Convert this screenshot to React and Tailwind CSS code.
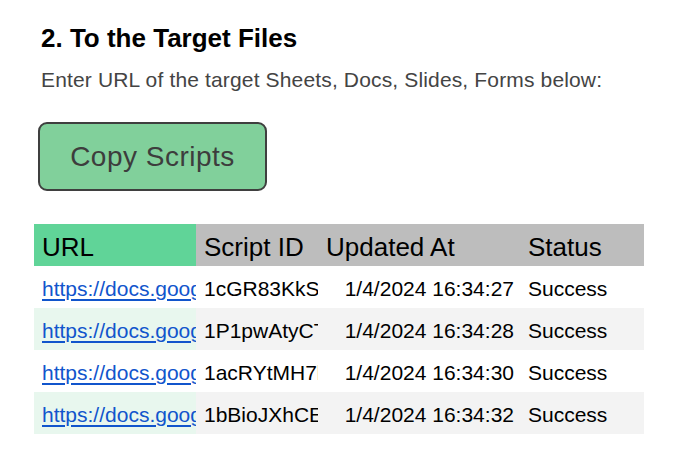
import React from "react";

const rows = [
  { url: "https://docs.google.com/spreadsheets/d/1x", id: "1cGR83KkSq0vZ7", at: "1/4/2024 16:34:27", status: "Success" },
  { url: "https://docs.google.com/document/d/1y", id: "1P1pwAtyCTf8Lm", at: "1/4/2024 16:34:28", status: "Success" },
  { url: "https://docs.google.com/presentation/d/1z", id: "1acRYtMH7bQe2W", at: "1/4/2024 16:34:30", status: "Success" },
  { url: "https://docs.google.com/forms/d/1w", id: "1bBioJXhCEr4Kp", at: "1/4/2024 16:34:32", status: "Success" },
];

export default function App() {
  return (
    <div className="w-[674px] h-[476px] bg-white pl-[34px] pt-[23px] font-['Liberation_Sans',Arial,sans-serif] text-black">
      <h2 className="ml-[7px] text-[26px] leading-[30px] font-bold text-black">
        2. To the Target Files
      </h2>
      <p className="ml-[7px] mt-[15px] text-[21px] leading-[24px] tracking-[0.15px] text-[#444444]">
        Enter URL of the target Sheets, Docs, Slides, Forms below:
      </p>
      <button className="ml-[4px] mt-[30px] flex h-[69px] w-[229px] items-center justify-center rounded-[9px] border-2 border-[#3f3f3f] bg-[#81d09b] text-[28px] leading-[32px] tracking-[0.5px] text-[#3d3d3d]">
        Copy Scripts
      </button>
      <div className="mt-[33px] grid w-[610px] grid-cols-[162px_122px_202px_124px]">
        <div className="h-[42px] bg-[#60d498] pl-[8px] pt-[9px] text-[26px] leading-[28px] whitespace-nowrap overflow-hidden">URL</div>
        <div className="h-[42px] bg-[#bdbdbd] pl-[8px] pt-[9px] text-[26px] leading-[28px] whitespace-nowrap overflow-hidden">Script ID</div>
        <div className="h-[42px] bg-[#bdbdbd] pl-[8px] pt-[9px] text-[26px] leading-[28px] whitespace-nowrap overflow-hidden">Updated At</div>
        <div className="h-[42px] bg-[#bdbdbd] pl-[8px] pt-[9px] text-[26px] leading-[28px] whitespace-nowrap overflow-hidden">Status</div>
        {rows.map((r, i) => {
          const odd = i % 2 === 1;
          return (
            <React.Fragment key={i}>
              <div className={`h-[42px] pl-[8px] pt-[4px] text-[21px] leading-[38px] whitespace-nowrap overflow-hidden ${odd ? "bg-[#e8f7ee]" : "bg-white"}`}>
                <a href="#" className="text-[#1155cc] underline decoration-[1.5px] underline-offset-[3px]">{r.url}</a>
              </div>
              <div className={`h-[42px] pl-[8px] pt-[4px] text-[21px] leading-[38px] whitespace-nowrap overflow-hidden ${odd ? "bg-[#f3f3f3]" : "bg-white"}`}>
                {r.id}
              </div>
              <div className={`h-[42px] pr-[6px] pt-[4px] text-right text-[21px] leading-[38px] whitespace-nowrap overflow-hidden ${odd ? "bg-[#f3f3f3]" : "bg-white"}`}>
                {r.at}
              </div>
              <div className={`h-[42px] pl-[8px] pt-[4px] text-[21px] leading-[38px] whitespace-nowrap overflow-hidden ${odd ? "bg-[#f3f3f3]" : "bg-white"}`}>
                {r.status}
              </div>
            </React.Fragment>
          );
        })}
      </div>
    </div>
  );
}
